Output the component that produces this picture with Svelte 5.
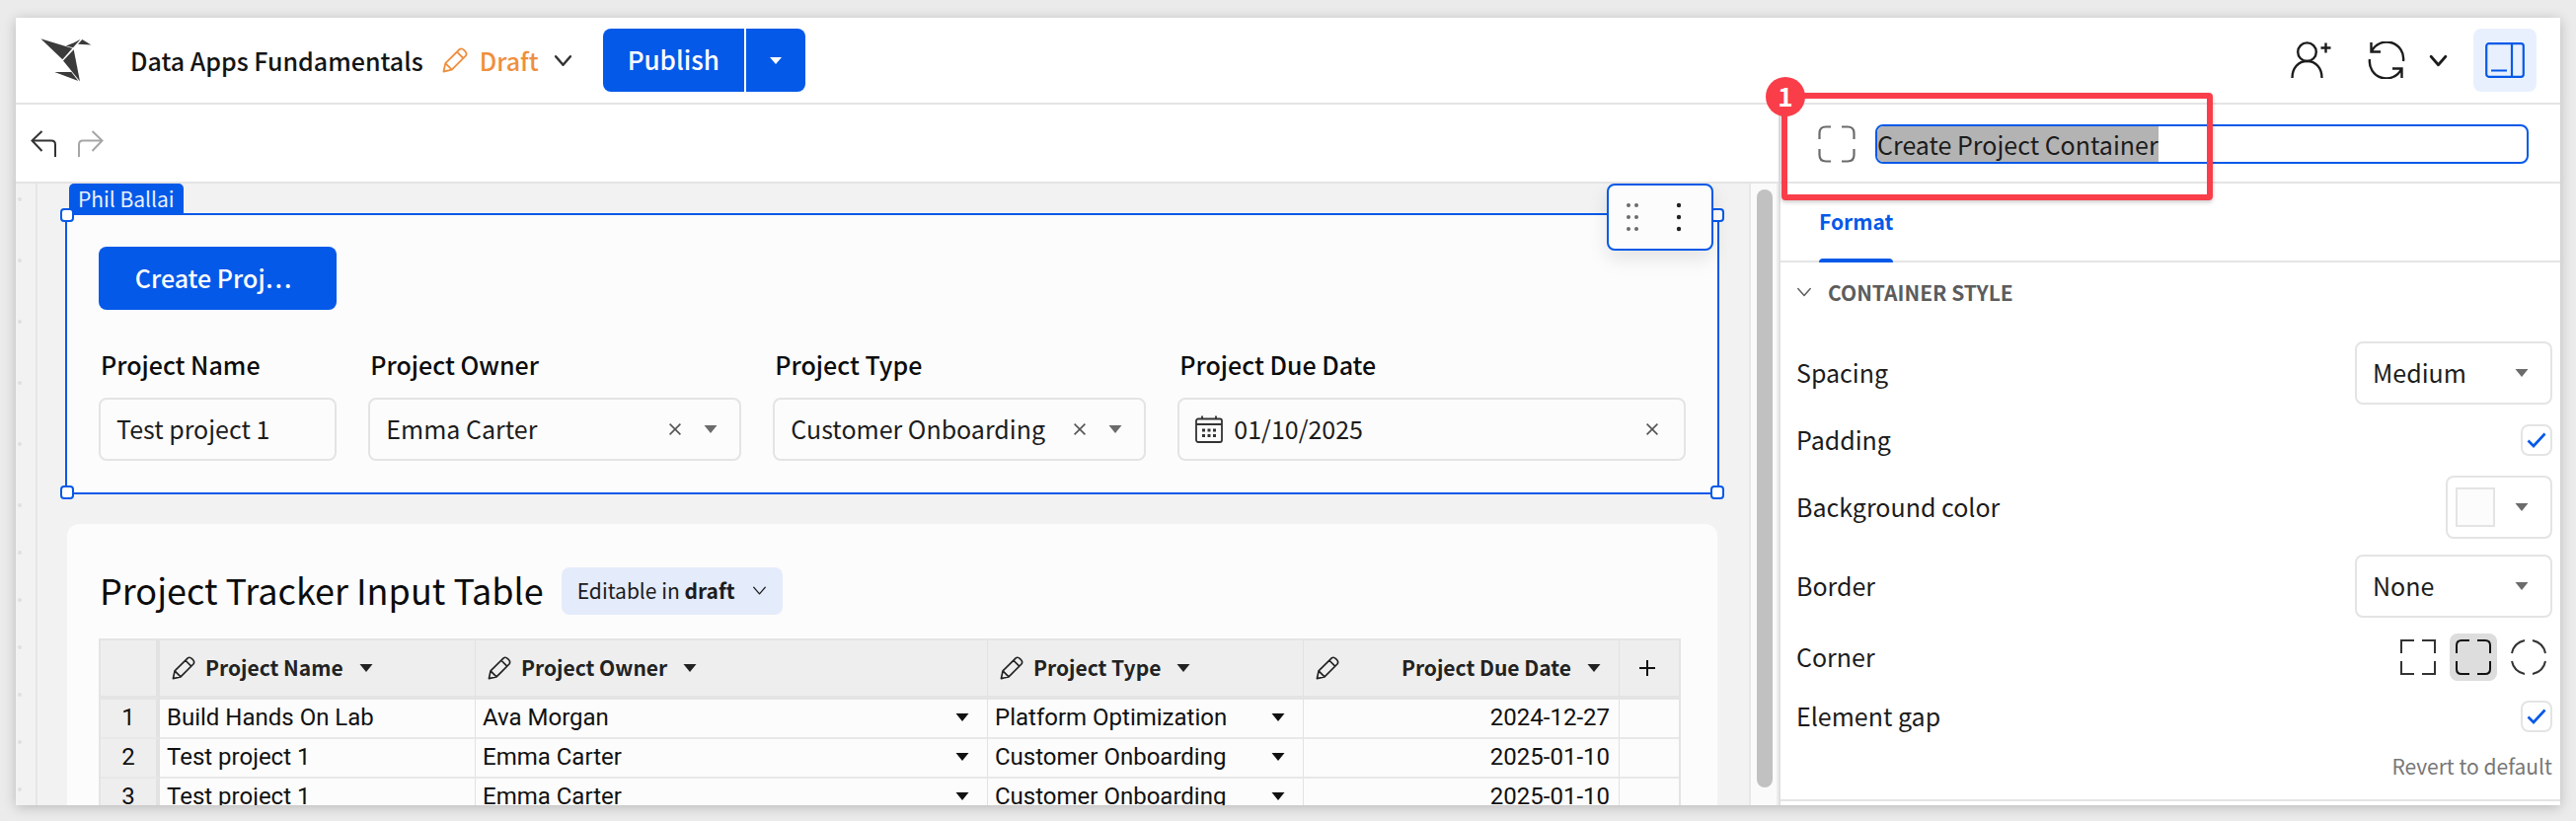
<script>
  import { onMount } from 'svelte';

  let nameInput = $state();
  let title = $state('Create Project Container');

  onMount(() => {
    nameInput.focus({ preventScroll: true });
    nameInput.select();
  });

  const rows = [
    { owner: 'Ava Morgan', name: 'Build Hands On Lab', type: 'Platform Optimization', due: '2024-12-27' },
    { owner: 'Emma Carter', name: 'Test project 1', type: 'Customer Onboarding', due: '2025-01-10' },
    { owner: 'Emma Carter', name: 'Test project 1', type: 'Customer Onboarding', due: '2025-01-10' }
  ];
  const gutterNear = [0, 1, 2, 3, 4];
  const gutterFar = [0, 1, 2, 3, 4, 5, 6];
</script>

{#snippet caret()}
  <svg class="caret" width="14" height="8" viewBox="0 0 14 8" aria-hidden="true"><path d="M.5 0h13L7 8z" fill="currentColor" /></svg>
{/snippet}

{#snippet chevron(size, weight)}
  <svg width={size} height={size} viewBox="0 0 18 18" fill="none" stroke="currentColor" stroke-width={weight} stroke-linecap="round" stroke-linejoin="round" aria-hidden="true"><path d="M2 5l7 8 7-8" /></svg>
{/snippet}

{#snippet cross()}
  <svg width="12" height="12" viewBox="0 0 12 12" stroke="#555" stroke-width="1.6" aria-hidden="true"><path d="M.6.6l10.8 10.8M11.4.6L.6 11.4" /></svg>
{/snippet}

{#snippet pencil(size)}
  <svg width={size} height={size} viewBox="0 0 26 26" fill="none" stroke="currentColor" stroke-width="1.8" stroke-linejoin="round" aria-hidden="true">
    <path d="M1.500 24.500l1.800-8.300L17.600 2q2.200-1.600 4.600.8l1 1Q25.400 6 24 8.400L9.800 22.700zM3.300 16.200l6.500 6.500M15 4.600l6.400 6.400" />
  </svg>
{/snippet}

<div class="page">
  <div class="app">
    <header class="topbar">
      <svg class="logo" width="52" height="46" viewBox="0 0 52 46" fill="#3a3a3a" aria-hidden="true">
        <path d="M.3 1.300l32 9.800L22.300 22.300z" />
        <path d="M25.800 8.500L34 5.300 40.600 1.800 33 10.200z" />
        <path d="M42.300 2l9 5.500-13.300-.8z" />
        <path d="M33.700 12.200L40 44.500 23 23.500z" />
        <path d="M14.300 35h17l7 9z" />
      </svg>
      <span class="doc-title">Data Apps Fundamentals</span>
      <button class="draft">
        {@render pencil(26)}
        <span>Draft</span>
        <span class="draft-chevron">{@render chevron(19, 2.4)}</span>
      </button>
      <div class="publish">
        <button class="publish-main">Publish</button>
        <button class="publish-more" aria-label="Publish options">
          <svg width="12" height="7" viewBox="0 0 12 7" aria-hidden="true"><path d="M0 0h12L6 7z" fill="#fff" /></svg>
        </button>
      </div>
      <div class="top-actions">
        <button class="icon-btn" aria-label="Share">
          <svg width="42" height="38" viewBox="0 0 42 38" fill="none" stroke="#1c1c1c" stroke-width="2.400" aria-hidden="true">
            <circle cx="16.500" cy="10.700" r="9.300" /><path d="M1.500 37c0-10 6-17 15-17s15 7 15 17M35.500 1.500v10M30.500 6.500h10" />
          </svg>
        </button>
        <button class="icon-btn refresh" aria-label="Refresh">
          <svg width="38" height="38" viewBox="0 0 38 38" fill="none" stroke="#1c1c1c" stroke-width="2.400" aria-hidden="true">
            <path d="M3.500 1v9.500h9.500M3.800 10.300A17 17 0 0 1 36 20M34.500 37v-9.500H25M34.200 27.700A17 17 0 0 1 2 18" />
          </svg>
        </button>
        <button class="icon-btn" aria-label="Refresh options">{@render chevron(19, 2.6)}</button>
        <button class="icon-btn panel-toggle" aria-label="Toggle editor panel">
          <svg width="40" height="36" viewBox="0 0 40 36" fill="none" stroke="#0559e8" stroke-width="2.200" aria-hidden="true">
            <rect x="1.200" y="1.200" width="37.600" height="33.600" rx="2.500" /><path d="M27 1v34M6 28.500h16" />
          </svg>
        </button>
      </div>
    </header>

    <div class="body">
      <div class="left">
        <div class="toolbar">
          <button class="icon-btn" aria-label="Undo">
            <svg width="26" height="28" viewBox="0 0 26 28" fill="none" stroke="#333" stroke-width="2" aria-hidden="true"><path d="M11.500 1L1.500 10.500l10 10.500M1.500 10.500H21q4 0 4 4V27" /></svg>
          </button>
          <button class="icon-btn" aria-label="Redo">
            <svg width="26" height="28" viewBox="0 0 26 28" fill="none" stroke="#a6a6a6" stroke-width="2" aria-hidden="true"><path d="M14.500 1l10 9.500-10 10.500M24.500 10.500H5q-4 0-4 4V27" /></svg>
          </button>
        </div>

        <div class="canvas">
          <div class="gutter" aria-hidden="true">
            <div class="near">{#each gutterNear as dot (dot)}<i></i>{/each}</div>
            <div class="far">{#each gutterFar as dot (dot)}<i></i>{/each}</div>
          </div>

          <main class="sheet">
            <section class="container selected">
              <span class="tag">Phil Ballai</span>
              <i class="handle tl"></i><i class="handle tr"></i><i class="handle bl"></i><i class="handle br"></i>
              <div class="float-tools">
                <button class="icon-btn" aria-label="Drag">
                  <svg width="14" height="30" viewBox="0 0 14 30" fill="#6a6a6a" aria-hidden="true"><circle cx="3" cy="3" r="2" /><circle cx="11" cy="3" r="2" /><circle cx="3" cy="15" r="2" /><circle cx="11" cy="15" r="2" /><circle cx="3" cy="27" r="2" /><circle cx="11" cy="27" r="2" /></svg>
                </button>
                <button class="icon-btn" aria-label="More">
                  <svg width="6" height="30" viewBox="0 0 6 30" fill="#222" aria-hidden="true"><circle cx="3" cy="3" r="2.200" /><circle cx="3" cy="15" r="2.200" /><circle cx="3" cy="27" r="2.200" /></svg>
                </button>
              </div>

              <div class="grid">
                <button class="create">Create Proj…</button>
                <div class="field span2 row2">
                  <label for="p-name">Project Name</label>
                  <div class="box"><input id="p-name" type="text" value="Test project 1" /></div>
                </div>
                <div class="field span3 row2">
                  <label for="p-owner">Project Owner</label>
                  <div class="box">
                    <select id="p-owner"><option>Emma Carter</option></select>
                    <button class="icon-btn" aria-label="Clear owner">{@render cross()}</button>
                    {@render caret()}
                  </div>
                </div>
                <div class="field span3 row2">
                  <label for="p-type">Project Type</label>
                  <div class="box">
                    <select id="p-type"><option>Customer Onboarding</option></select>
                    <button class="icon-btn" aria-label="Clear type">{@render cross()}</button>
                    {@render caret()}
                  </div>
                </div>
                <div class="field span4 row2">
                  <label for="p-due">Project Due Date</label>
                  <div class="box date">
                    <svg width="28" height="28" viewBox="0 0 28 28" fill="none" stroke="#333" stroke-width="1.800" aria-hidden="true">
                      <rect x="1" y="3.500" width="26" height="23.500" rx="2" /><path d="M1 9h26M7 .5v3M21 .5v3" />
                      <path d="M7 15h3M12.500 15h3M18 15h3M7 20.500h3M12.500 20.500h3M18 20.500h3" stroke-width="3" />
                    </svg>
                    <input id="p-due" type="text" value="01/10/2025" />
                    <button class="icon-btn" aria-label="Clear date">{@render cross()}</button>
                  </div>
                </div>
              </div>
            </section>

            <section class="container data">
              <div class="data-head">
                <h2>Project Tracker Input Table</h2>
                <button class="pill"><span>Editable in <b>draft</b></span>{@render chevron(15, 1.6)}</button>
              </div>
              <table>
                <colgroup>
                  <col class="c-num" /><col class="c-mid" /><col /><col class="c-mid" /><col class="c-mid" /><col class="c-add" />
                </colgroup>
                <thead>
                  <tr>
                    <th class="num" aria-label="Row"></th>
                    <th><div class="head">{@render pencil(24)}<span>Project Name</span>{@render caret()}</div></th>
                    <th><div class="head">{@render pencil(24)}<span>Project Owner</span>{@render caret()}</div></th>
                    <th><div class="head">{@render pencil(24)}<span>Project Type</span>{@render caret()}</div></th>
                    <th><div class="head due">{@render pencil(24)}<span>Project Due Date</span>{@render caret()}</div></th>
                    <th>
                      <button class="icon-btn add" aria-label="Add column">
                        <svg width="16" height="16" viewBox="0 0 16 16" stroke="#111" stroke-width="2" aria-hidden="true"><path d="M8 0v16M0 8h16" /></svg>
                      </button>
                    </th>
                  </tr>
                </thead>
                <tbody>
                  {#each rows as row, i (i)}
                    <tr>
                      <td class="num">{i + 1}</td>
                      <td>{row.name}</td>
                      <td><div class="pick"><span>{row.owner}</span>{@render caret()}</div></td>
                      <td><div class="pick"><span>{row.type}</span>{@render caret()}</div></td>
                      <td class="right">{row.due}</td>
                      <td></td>
                    </tr>
                  {/each}
                </tbody>
              </table>
            </section>
          </main>

          <div class="scroll" aria-hidden="true"><div class="thumb"></div></div>
        </div>
      </div>

      <aside class="panel">
        <div class="name-row">
          <svg width="38" height="38" viewBox="0 0 38 38" fill="none" stroke="#6b6b6b" stroke-width="2.200" aria-hidden="true">
            <path d="M1.500 14V8q0-6.500 6.500-6.500h5M24 1.500h6q6.500 0 6.500 6.500v6M36.500 24v6q0 6.500-6.500 6.500h-6M13 36.500H8q-6.500 0-6.500-6.500v-6" />
          </svg>
          <input bind:this={nameInput} bind:value={title} type="text" aria-label="Element name" spellcheck="false" />
          <div class="callout" aria-hidden="true"><span>1</span></div>
        </div>
        <div class="tabs"><button class="tab">Format</button></div>
        <div class="settings">
          <button class="section-title">{@render chevron(16, 1.6)}<span>CONTAINER STYLE</span></button>
          <div class="rows">
            <div class="row">
              <label for="s-spacing">Spacing</label>
              <div class="box drop"><select id="s-spacing"><option>Medium</option></select>{@render caret()}</div>
            </div>
            <div class="row low">
              <label for="s-padding">Padding</label>
              <div class="check"><input id="s-padding" type="checkbox" checked /><svg width="20" height="16" viewBox="0 0 20 16" fill="none" stroke="#0559e8" stroke-width="2.600" aria-hidden="true"><path d="M1.500 8.500L7 14 18.500 1.500" /></svg></div>
            </div>
            <div class="row">
              <span>Background color</span>
              <button class="box color" aria-label="Background color"><i class="swatch"></i>{@render caret()}</button>
            </div>
            <div class="row">
              <label for="s-border">Border</label>
              <div class="box drop"><select id="s-border"><option>None</option></select>{@render caret()}</div>
            </div>
            <div class="row mid">
              <span>Corner</span>
              <div class="corners">
                <button class="icon-btn" aria-label="Square"><svg width="36" height="36" viewBox="0 0 36 36" fill="none" stroke="#333" stroke-width="2"><path d="M1 14V1h13M22 1h13v13M35 22v13H22M14 35H1V22" /></svg></button>
                <button class="icon-btn on" aria-label="Rounded"><svg width="36" height="36" viewBox="0 0 36 36" fill="none" stroke="#111" stroke-width="2"><path d="M1 14V6q0-5 5-5h8M22 1h8q5 0 5 5v8M35 22v8q0 5-5 5h-8M14 35H6q-5 0-5-5v-8" /></svg></button>
                <button class="icon-btn" aria-label="Round"><svg width="36" height="36" viewBox="0 0 36 36" fill="none" stroke="#333" stroke-width="2"><path d="M1 14Q3 3.500 14 1M22 1Q33 3.500 35 14M35 22Q33 32.500 22 35M14 35Q3 32.500 1 22" /></svg></button>
              </div>
            </div>
            <div class="row low">
              <label for="s-gap">Element gap</label>
              <div class="check"><input id="s-gap" type="checkbox" checked /><svg width="20" height="16" viewBox="0 0 20 16" fill="none" stroke="#0559e8" stroke-width="2.600" aria-hidden="true"><path d="M1.500 8.500L7 14 18.500 1.500" /></svg></div>
            </div>
            <button class="revert">Revert to default</button>
          </div>
        </div>
      </aside>
    </div>
  </div>
</div>

<style>
  :global(body) {
    margin: 0;
    background: #ebebeb;
  }
  .page,
  .page * {
    box-sizing: border-box;
  }
  .page {
    height: 100vh;
    padding: 18px 16px 16px;
    overflow: hidden;
    background: #ebebeb;
    font-family: 'Noto Sans CJK SC', 'Noto Sans', sans-serif;
    font-size: 25px;
    line-height: 36px;
    color: #1c1c1c;
  }
  button,
  input,
  select {
    margin: 0;
    padding: 0;
    border: 0;
    background: none;
    font: inherit;
    color: inherit;
    appearance: none;
    border-radius: 0;
  }
  svg {
    display: block;
    flex: none;
  }
  .app {
    display: flex;
    flex-direction: column;
    height: 100%;
    background: #fff;
    box-shadow: 0 2px 12px rgba(0, 0, 0, 0.22);
  }
  .icon-btn {
    display: flex;
    align-items: center;
    justify-content: center;
  }

  .topbar {
    display: flex;
    align-items: center;
    flex: none;
    height: 88px;
    padding: 0 24px 0 25px;
    border-bottom: 2px solid #e4e4e4;
  }
  .doc-title {
    margin-left: 39px;
    font-weight: 500;
    color: #141414;
  }
  .draft {
    display: flex;
    align-items: center;
    gap: 12px;
    margin-left: 19px;
    font-weight: 500;
    color: #ee8f3e;
  }
  .draft-chevron {
    margin-left: 3px;
    color: #333;
  }
  .publish {
    display: flex;
    gap: 2px;
    height: 64px;
    margin-left: 31px;
    border-radius: 8px;
    overflow: hidden;
    color: #fff;
    font-size: 26px;
    font-weight: 500;
  }
  .publish-main {
    padding: 0 25px 2px;
    background: #0559e8;
  }
  .publish-more {
    display: flex;
    align-items: center;
    justify-content: center;
    width: 60px;
    background: #0559e8;
  }
  .top-actions {
    display: flex;
    align-items: center;
    gap: 24px;
    margin-left: auto;
  }
  .refresh {
    margin-left: 12px;
  }
  .panel-toggle {
    width: 64px;
    height: 64px;
    margin-left: 2px;
    border-radius: 8px;
    background: #e9f0fd;
  }

  .body {
    display: flex;
    flex: 1;
    min-height: 0;
  }
  .left {
    display: flex;
    flex-direction: column;
    flex: 1;
    min-width: 0;
  }
  .toolbar {
    display: flex;
    align-items: center;
    flex: none;
    gap: 22px;
    height: 80px;
    padding: 2px 15px 0;
    border-bottom: 2px solid #e4e4e4;
  }
  .canvas {
    display: flex;
    flex: 1;
    min-height: 0;
    background: #f2f2f2;
    overflow: hidden;
  }
  .gutter {
    display: flex;
    flex-direction: column;
    flex: none;
    width: 22px;
    padding: 14px 2px 0;
    border-right: 2px solid #e6e6e6;
  }
  .near,
  .far {
    display: flex;
    flex-direction: column;
  }
  .near {
    gap: 58px;
    margin-bottom: 58px;
  }
  .far {
    gap: 44px;
  }
  .gutter i {
    width: 4px;
    height: 4px;
    border-radius: 50%;
    background: #e0e0e0;
  }
  .sheet {
    flex: 1;
    min-width: 0;
    padding: 30px 30px 0 28px;
  }
  .container {
    position: relative;
    background: #fcfcfc;
  }
  .selected {
    height: 285px;
    padding: 32px;
    border: 2px solid #0559e8;
  }
  .tag {
    position: absolute;
    left: 2px;
    top: -32px;
    height: 32px;
    padding: 0 9px;
    border-radius: 5px 5px 0 0;
    background: #0559e8;
    color: #eaf0fd;
    font-size: 21px;
    line-height: 30px;
  }
  .handle {
    position: absolute;
    width: 14px;
    height: 14px;
    border: 2px solid #0559e8;
    border-radius: 4px;
    background: #fff;
  }
  .tl,
  .tr {
    top: -7px;
  }
  .bl,
  .br {
    bottom: -7px;
  }
  .tl,
  .bl {
    left: -7px;
  }
  .tr,
  .br {
    right: -7px;
  }
  .float-tools {
    position: absolute;
    top: -32px;
    right: 4px;
    display: flex;
    justify-content: space-between;
    width: 108px;
    height: 68px;
    padding: 0 30px 0 17px;
    border: 2px solid #0559e8;
    border-radius: 8px;
    background: #fcfcfc;
    box-shadow: 0 8px 20px rgba(0, 0, 0, 0.1);
  }
  .grid {
    display: grid;
    grid-template-columns: repeat(12, minmax(0, 1fr));
    column-gap: 32px;
    row-gap: 36px;
  }
  .create {
    grid-column: span 2;
    height: 64px;
    padding: 0 9px 2px 0;
    border-radius: 8px;
    background: #0559e8;
    color: #fff;
    font-weight: 500;
  }
  .row2 {
    grid-row: 2;
  }
  .span2 {
    grid-column: span 2;
  }
  .span3 {
    grid-column: span 3;
  }
  .span4 {
    grid-column: span 4;
  }
  .field label {
    display: block;
    margin-bottom: 16px;
    padding: 1px 2px 0;
    font-weight: 500;
    color: #0c0c0c;
  }
  .box {
    display: flex;
    align-items: center;
    height: 64px;
    padding: 0 22px 0 16px;
    border: 2px solid #e4e4e4;
    border-radius: 8px;
    color: #6b6b6b;
  }
  .box select,
  .box input {
    flex: 1;
    min-width: 0;
    height: 60px;
    padding-bottom: 2px;
    color: #1c1c1c;
  }
  .box .icon-btn {
    margin-right: 23px;
  }
  .box.date .icon-btn {
    margin-right: 4px;
  }
  .box.date svg {
    margin-right: 11px;
  }
  .box.date .icon-btn svg {
    margin: 0;
  }

  .data {
    margin: 30px 2px 0;
    height: 400px;
    padding: 32px;
    border-radius: 12px;
  }
  .data-head {
    display: flex;
    align-items: center;
    gap: 18px;
    height: 72px;
    margin-bottom: 12px;
    padding-left: 1px;
  }
  h2 {
    margin: 0;
    padding-bottom: 4px;
    font-size: 36px;
    line-height: 48px;
    font-weight: 400;
    color: #0c0c0c;
  }
  .pill {
    display: flex;
    align-items: center;
    gap: 17px;
    height: 48px;
    padding: 0 16px 2px;
    border-radius: 8px;
    background: #e4ebfb;
    font-size: 21px;
  }
  b {
    font-weight: 700;
  }
  table {
    width: calc(100% - 5px);
    table-layout: fixed;
    border-collapse: separate;
    border-spacing: 0;
    border: 2px solid #e4e4e4;
    font-family: Roboto, sans-serif;
    font-size: 24px;
    line-height: 32px;
    color: #111;
  }
  .c-num {
    width: 60px;
  }
  .c-mid {
    width: 320px;
  }
  .c-add {
    width: 60px;
  }
  th {
    height: 60px;
    padding: 0 12px;
    border-bottom: 4px solid #e4e4e4;
    border-right: 1px solid #e2e2e2;
    background: #eee;
    font-family: 'Noto Sans CJK SC', 'Noto Sans', sans-serif;
    font-size: 21px;
    font-weight: 700;
    text-align: left;
  }
  td {
    height: 40px;
    padding: 0 7px 2px;
    border-bottom: 2px solid #e8e8e8;
    border-right: 1px solid #e2e2e2;
    white-space: nowrap;
  }
  tr > :last-child {
    border-right: 0;
  }
  th.num,
  td.num {
    padding: 0 0 2px;
    border-right: 4px solid #e2e2e2;
    background: #eee;
    text-align: center;
  }
  td.right {
    padding-right: 9px;
    text-align: right;
  }
  .head {
    display: flex;
    align-items: center;
    gap: 10px;
    color: #222;
  }
  .head span {
    padding-bottom: 2px;
  }
  .head .caret {
    margin-left: 6px;
  }
  .due span {
    margin-left: auto;
  }
  .due {
    margin-right: 6px;
  }
  .add {
    width: 32px;
    height: 32px;
  }
  .pick {
    display: flex;
    align-items: center;
    justify-content: space-between;
    padding-right: 11px;
  }

  .scroll {
    flex: none;
    width: 30px;
    padding: 6px 4px 18px 6px;
    border-left: 2px solid #e8e8e8;
    border-right: 2px solid #ededed;
    background: #fafafa;
  }
  .thumb {
    width: 16px;
    height: 100%;
    border-radius: 8px;
    background: #c1c1c1;
  }

  .panel {
    flex: none;
    width: 792px;
    border-left: 2px solid #e0e0e0;
  }
  .name-row {
    position: relative;
    display: flex;
    align-items: center;
    gap: 20px;
    height: 80px;
    padding: 2px 32px 0 38px;
    border-bottom: 2px solid #e4e4e4;
  }
  .name-row input {
    flex: 1;
    min-width: 0;
    height: 40px;
    border: 2px solid #0559e8;
    border-radius: 8px;
    outline: none;
    line-height: 36px;
  }
  .name-row input::selection {
    background: #b3b3b3;
    color: #1c1c1c;
  }
  .callout {
    position: absolute;
    left: 1px;
    top: -12px;
    width: 437px;
    height: 109px;
    border: 6px solid #f93e4a;
    border-radius: 4px;
    box-shadow: 0 2px 4px rgba(0, 0, 0, 0.2);
    pointer-events: none;
  }
  .callout span {
    position: absolute;
    left: -22px;
    top: -22px;
    width: 40px;
    height: 40px;
    border-radius: 50%;
    background: #f93e4a;
    color: #fff;
    font-size: 26px;
    font-weight: 700;
    line-height: 38px;
    text-align: center;
  }
  .tabs {
    display: flex;
    height: 80px;
    padding: 0 39px;
    border-bottom: 2px solid #e4e4e4;
  }
  .tab {
    position: relative;
    padding-bottom: 2px;
    font-size: 21px;
    font-weight: 700;
    color: #0559e8;
  }
  .tab::after {
    content: '';
    position: absolute;
    left: 0;
    right: 0;
    bottom: -2px;
    height: 4px;
    border-radius: 4px 4px 0 0;
    background: #0559e8;
  }
  .settings {
    padding: 14px 8px 16px 16px;
    border-bottom: 2px solid #e4e4e4;
  }
  .section-title {
    display: flex;
    align-items: center;
    gap: 16px;
    height: 32px;
    font-size: 21px;
    font-weight: 700;
    color: #5c5c5c;
  }
  .rows {
    display: flex;
    flex-direction: column;
    gap: 16px;
    padding-top: 34px;
  }
  .row {
    display: flex;
    align-items: center;
    justify-content: space-between;
    height: 64px;
  }
  .row > label,
  .row > span {
    padding-bottom: 3px;
  }
  .low {
    height: 40px;
  }
  .mid {
    height: 48px;
  }
  .drop {
    width: 200px;
  }
  .color {
    justify-content: space-between;
    width: 108px;
    padding-left: 8px;
  }
  .swatch {
    width: 40px;
    height: 40px;
    border: 2px solid #e4e4e4;
    background: #fcfcfc;
  }
  .check {
    position: relative;
    width: 32px;
    height: 32px;
  }
  .check input {
    display: block;
    width: 32px;
    height: 32px;
    border: 2px solid #e4e4e4;
    border-radius: 8px;
  }
  .check svg {
    position: absolute;
    left: 6px;
    top: 8px;
    pointer-events: none;
  }
  .corners {
    display: flex;
    gap: 8px;
  }
  .corners .icon-btn {
    width: 48px;
    height: 48px;
    border-radius: 8px;
  }
  .on {
    background: #ddd;
  }
  .revert {
    align-self: flex-end;
    height: 32px;
    padding-bottom: 4px;
    font-size: 21px;
    line-height: 28px;
    color: #777;
  }
</style>
